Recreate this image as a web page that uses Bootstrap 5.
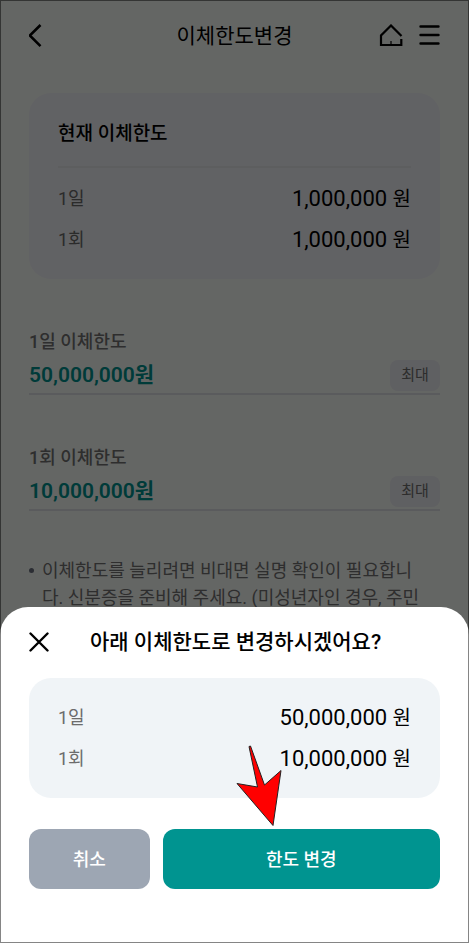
<!DOCTYPE html>
<html lang="ko">
<head>
<meta charset="utf-8">
<meta name="viewport" content="width=device-width, initial-scale=1">
<title>이체한도변경</title>
<link href="https://cdn.jsdelivr.net/npm/bootstrap@5.3.0/dist/css/bootstrap.min.css" rel="stylesheet">
<style>
  body { font-family: Roboto, "Noto Sans CJK KR", sans-serif; font-size: 18px; line-height: 27px; color: #000; background: #fbfffb; }
  .screen { min-height: 100vh; }
  .gutter { padding-left: 29px; padding-right: 29px; }
  .topbar { height: 71px; display: grid; grid-template-columns: 1fr auto 1fr; }
  .screen-title, .sheet-title { font-size: 21px; line-height: 30px; margin: 0; }
  .screen-title { font-weight: 400; }
  .sheet-title { font-weight: 500; }
  .icon-btn { padding: 0; border: 0; background: none; color: #000; line-height: 0; }
  .panel { border-radius: 22px; padding: 19px 29px; background: #f0f4f7; }
  .panel-dim { background: #f3f4f9; margin-top: 22px; }
  .panel-title { font-size: 19px; line-height: 44px; font-weight: 500; margin: 0 0 10px; }
  .panel-rule { height: 2px; background: #e9ebee; margin-bottom: 10px; }
  .limit-row { height: 41px; }
  .limit-row dt { font-weight: 400; color: #6c6c6c; }
  .limit-row dd { font-size: 22px; margin: 0; }
  .unit { font-size: 20px; }
  .limit-field { margin-top: 48px; }
  .limit-field label { line-height: 30px; font-weight: 500; color: #737373; display: block; }
  .field-line { height: 38px; border-bottom: 2px solid #e1e3e8; }
  .field-line input { min-width: 0; border: 0; padding: 0; background: none; color: #009490; font-size: 21px; line-height: 30px; font-weight: 600; }
  .max-btn { width: 50px; height: 31px; border: 0; border-radius: 8px; background: #eeeff4; color: #707070; font-size: 15px; line-height: 20px; padding: 0; }
  .notice { margin: 46px 0 0; padding: 0 14px 0 13px; color: #737373; list-style: none; }
  .notice li { position: relative; }
  .notice li::before { content: ""; position: absolute; left: -13px; top: 11px; width: 5px; height: 5px; border-radius: 50%; background: #6b7280; }
  .dimmer { background: rgba(0, 0, 0, .6); }
  .sheet { border-radius: 28px 28px 0 0; background: #fff; padding-bottom: 54px; }
  .sheet-head { height: 69px; margin-bottom: 2px; }
  .sheet-title { margin-left: 41px; }
  .actions { margin-top: 31px; gap: 13px; }
  .action-btn { height: 60px; padding: 0; border: 0; border-radius: 12px; color: #fff; font-weight: 500; width: 100%; }
  .action-cancel { background: #9da6b3; flex: 30 1 0; }
  .action-confirm { background: #009490; }
  .confirm-wrap { flex: 69 1 0; }
  .pointer-arrow { left: 72px; bottom: 62px; pointer-events: none; }
  .frame { border: 1px solid rgba(0, 0, 0, .48); pointer-events: none; z-index: 5; }
</style>
</head>
<body>
<main class="screen gutter">
  <header class="topbar align-items-center">
    <button class="icon-btn text-start" type="button" aria-label="뒤로">
      <svg width="14" height="24" viewBox="0 0 14 24" fill="none" stroke="currentColor" stroke-width="2.6"><path d="M11.500 1 .8 11.500l10.700 10.700"/></svg>
    </button>
    <h1 class="screen-title">이체한도변경</h1>
    <div class="d-flex justify-content-end align-items-center gap-3">
      <button class="icon-btn" type="button" aria-label="홈">
        <svg width="24" height="24" viewBox="0 0 24 24" fill="none" stroke="currentColor" stroke-width="2.2"><path d="M22.500 12 12 1.500 2 11.500V21h20.300v-6"/><path d="M12 17v4" stroke-width="1.200"/></svg>
      </button>
      <button class="icon-btn" type="button" aria-label="메뉴">
        <svg width="21" height="24" viewBox="0 0 21 24" fill="none" stroke="currentColor" stroke-width="2.400" stroke-linecap="round"><path d="M1.500 2.500h18M1.500 11h18M1.500 19.500h18"/></svg>
      </button>
    </div>
  </header>

  <section class="panel panel-dim">
    <h2 class="panel-title">현재 이체한도</h2>
    <div class="panel-rule"></div>
    <dl class="m-0">
      <div class="limit-row d-flex justify-content-between align-items-center"><dt>1일</dt><dd>1,000,000 <span class="unit">원</span></dd></div>
      <div class="limit-row d-flex justify-content-between align-items-center"><dt>1회</dt><dd>1,000,000 <span class="unit">원</span></dd></div>
    </dl>
  </section>

  <form>
    <div class="limit-field">
      <label for="daily">1일 이체한도</label>
      <div class="field-line d-flex align-items-center">
        <input class="flex-grow-1" id="daily" type="text" value="50,000,000원">
        <button class="max-btn" type="button">최대</button>
      </div>
    </div>
    <div class="limit-field">
      <label for="once">1회 이체한도</label>
      <div class="field-line d-flex align-items-center">
        <input class="flex-grow-1" id="once" type="text" value="10,000,000원">
        <button class="max-btn" type="button">최대</button>
      </div>
    </div>
  </form>

  <ul class="notice">
    <li>이체한도를 늘리려면 비대면 실명 확인이 필요합니다. 신분증을 준비해 주세요. (미성년자인 경우, 주민</li>
  </ul>
</main>

<div class="dimmer position-fixed top-0 start-0 w-100 h-100"></div>

<section class="sheet gutter position-fixed bottom-0 start-0 w-100" role="dialog" aria-labelledby="sheet-title">
  <div class="sheet-head d-flex align-items-center">
    <button class="icon-btn" type="button" aria-label="닫기">
      <svg width="20" height="20" viewBox="0 0 20 20" fill="none" stroke="currentColor" stroke-width="2.400" stroke-linecap="round"><path d="m1.500 1.500 17 17m0-17-17 17"/></svg>
    </button>
    <h2 class="sheet-title" id="sheet-title">아래 이체한도로 변경하시겠어요?</h2>
  </div>
  <dl class="panel m-0">
    <div class="limit-row d-flex justify-content-between align-items-center"><dt>1일</dt><dd>50,000,000 <span class="unit">원</span></dd></div>
    <div class="limit-row d-flex justify-content-between align-items-center"><dt>1회</dt><dd>10,000,000 <span class="unit">원</span></dd></div>
  </dl>
  <div class="actions d-flex">
    <button class="action-btn action-cancel" type="button">취소</button>
    <div class="confirm-wrap position-relative">
      <button class="action-btn action-confirm" type="button">한도 변경</button>
      <svg class="pointer-arrow position-absolute" width="48" height="83" viewBox="0 0 48 83" fill="#f00" stroke="#222" stroke-width="1"><path d="M14 2.500 15.500 2 29.500 41 46 26.500 38 81.500 2 39.500 22.500 43Z"/></svg>
    </div>
  </div>
</section>
<div class="frame position-fixed top-0 start-0 w-100 h-100"></div>
<script src="https://cdn.jsdelivr.net/npm/bootstrap@5.3.0/dist/js/bootstrap.bundle.min.js"></script>
</body>
</html>
